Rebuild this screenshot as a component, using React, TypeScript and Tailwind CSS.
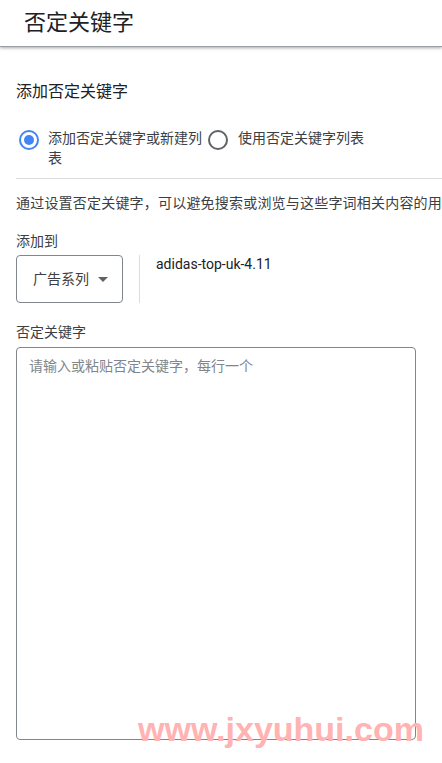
import React from "react";

const font = { fontFamily: 'Roboto, "Noto Sans CJK SC", sans-serif' };

function Radio({ checked }: { checked?: boolean }) {
  return (
    <span
      className={`flex h-5 w-5 shrink-0 items-center justify-center rounded-full border-2 ${
        checked ? "border-[#4285f4]" : "border-[#5f6368]"
      }`}
    >
      {checked && <span className="h-2.5 w-2.5 rounded-full bg-[#4285f4]" />}
    </span>
  );
}

export default function App() {
  return (
    <div className="relative h-[763px] w-[442px] overflow-hidden bg-white text-[#202124]" style={font}>
      <div className="flex h-[47px] items-center pl-6 shadow-[0_1px_3px_rgba(0,0,0,0.35)] border-b border-[#9aa0a6]">
        <span className="text-[22px] leading-none text-[#202124]">否定关键字</span>
      </div>

      <div className="px-4">
        <div className="mt-[34px] text-[16px] leading-[22px]">添加否定关键字</div>

        <div className="mt-[25px] flex items-start">
          <div className="flex w-[190px] items-start">
            <div className="ml-[3px] mt-[2px]">
              <Radio checked />
            </div>
            <div className="ml-[9px] text-[14px] leading-[20px] text-[#3c4043]">添加否定关键字或新建列表</div>
          </div>
          <div className="flex items-start">
            <div className="ml-[2px] mt-[2px]">
              <Radio />
            </div>
            <div className="ml-[10px] text-[14px] leading-[20px] text-[#3c4043]">使用否定关键字列表</div>
          </div>
        </div>
      </div>

      <div className="ml-4 mt-[10px] h-px bg-[#dadce0]" />

      <div className="px-4">
        <div className="mt-[14px] whitespace-nowrap text-[14px] leading-[20px] tracking-[0.2px] text-[#3c4043]">
          通过设置否定关键字，可以避免搜索或浏览与这些字词相关内容的用
        </div>

        <div className="mt-[18px] text-[14px] leading-[20px] text-[#3c4043]">添加到</div>

        <div className="mt-[4px] flex items-stretch">
          <div className="flex h-[48px] w-[107px] items-center rounded border border-[#80868b] pl-4">
            <span className="text-[14px] text-[#3c4043]">广告系列</span>
            <svg width="10" height="5" viewBox="0 0 10 5" className="ml-[9px]">
              <path d="M0 0 L5 5 L10 0 Z" fill="#5f6368" />
            </svg>
          </div>
          <div className="ml-4 w-px bg-[#dadce0]" />
          <div className="ml-4 text-[14px] leading-[18px] text-[#202124]">adidas-top-uk-4.11</div>
        </div>

        <div className="mt-[19px] text-[14px] leading-[20px] text-[#3c4043]">否定关键字</div>

        <div className="mt-[5px] h-[393px] w-[400px] rounded border border-[#80868b] px-3 pt-[6px]">
          <span className="text-[14px] leading-[20px] text-[#80868b]">请输入或粘贴否定关键字，每行一个</span>
        </div>
      </div>

      <div
        className="pointer-events-none absolute left-[138px] top-[712px] text-[34px] font-bold leading-none text-[#ffb3b3]"
        style={{ fontFamily: '"Liberation Sans", sans-serif' }}
      >
        www.jxyuhui.com
      </div>
    </div>
  );
}
